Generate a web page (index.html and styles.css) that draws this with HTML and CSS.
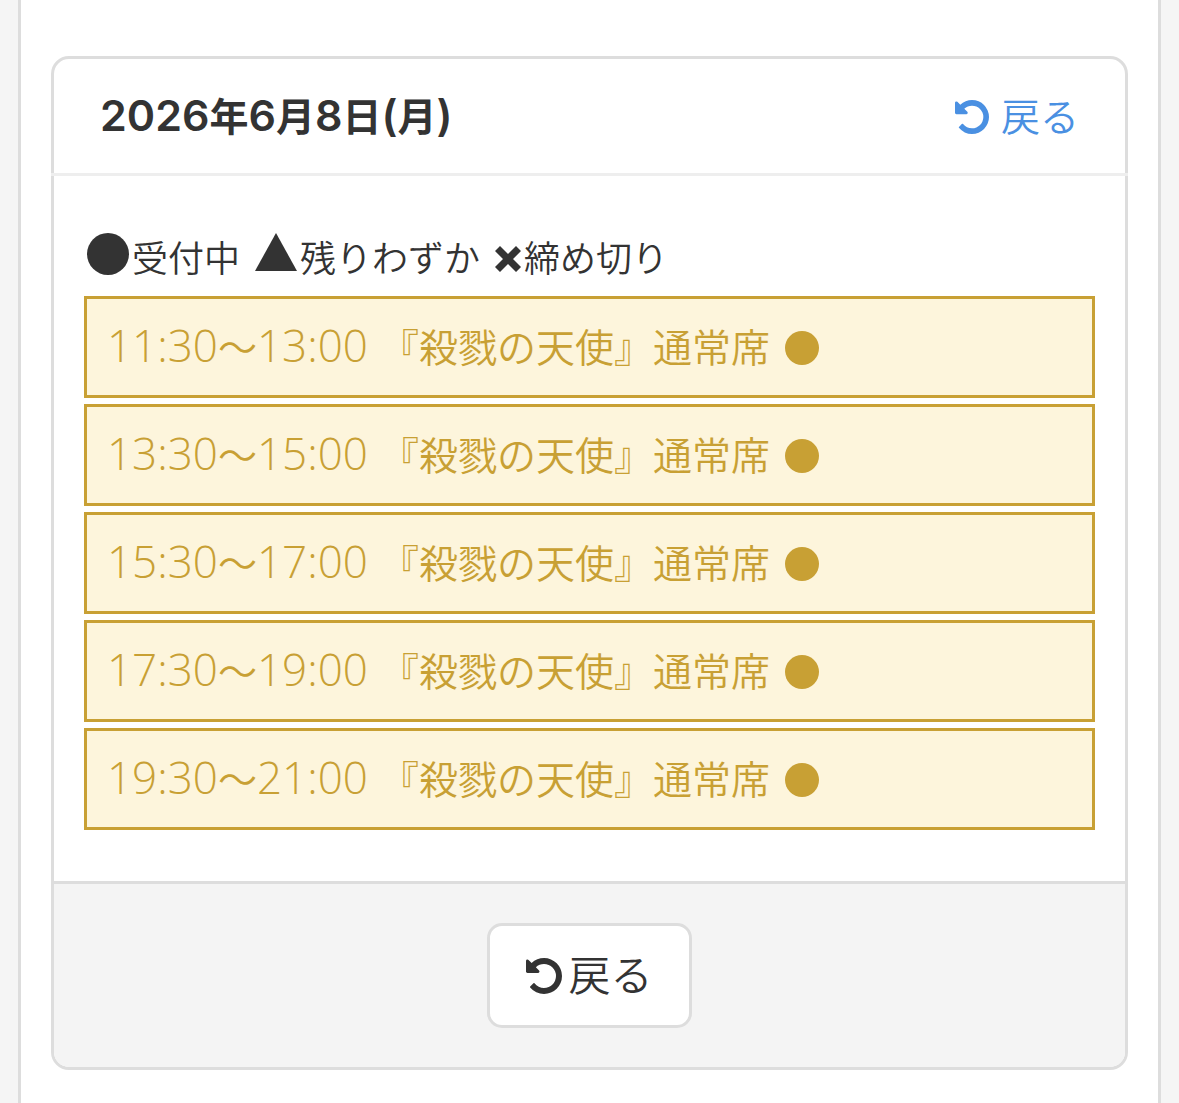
FILE: index.html
```html
<!DOCTYPE html>
<html lang="ja">
<head>
  <meta charset="UTF-8">
  <meta name="viewport" content="width=device-width, initial-scale=1">
  <title>2026年6月8日(月)</title>
  <link rel="stylesheet" href="styles.css">
</head>
<body>

  <svg class="defs" aria-hidden="true">
    <symbol id="undo" viewBox="128 128 1536 1536">
      <path d="M1664 896q0 156-61 298t-164 245-245 164-298 61q-172 0-327-72.500t-264-204.500q-7-10-6.500-22.500t8.500-20.500l137-138q10-9 25-9 16 2 23 12 73 95 179 147t225 52q104 0 198.500-40.500t163.500-109.500 109.500-163.500 40.500-198.500-40.500-198.500-109.500-163.500-163.500-109.500-198.500-40.500q-98 0-188 35.500t-160 101.500l137 138q31 30 14 69-17 40-59 40h-448q-26 0-45-19t-19-45v-448q0-42 40-59 39-17 69 14l130 129q107-101 244.500-156.500t284.500-55.500q156 0 298 61t245 164 164 245 61 298z"/>
    </symbol>
    <symbol id="circle" viewBox="0 0 42 42"><circle cx="21" cy="21" r="21"/></symbol>
    <symbol id="triangle" viewBox="0 0 42 42"><path d="M21 0L42 38H0z"/></symbol>
    <symbol id="times" viewBox="0 0 26 26"><path d="M5 0L13 8L21 0L26 5L18 13L26 21L21 26L13 18L5 26L0 21L8 13L0 5z"/></symbol>
  </svg>

  <main class="page">
    <section class="card">
      <header class="card-header">
        <h1><span class="num">2026</span>年<span class="num">6</span>月<span class="num">8</span>日<span class="num">(</span>月<span class="num">)</span></h1>
        <a class="back-link" href="#"><svg class="icon"><use href="#undo"/></svg>戻る</a>
      </header>

      <div class="card-body">
        <div class="legend">
          <span><svg class="icon-lg"><use href="#circle"/></svg>受付中</span>
          <span><svg class="icon-lg"><use href="#triangle"/></svg>残りわずか</span>
          <span><svg class="icon-sm"><use href="#times"/></svg>締め切り</span>
        </div>

        <ul class="slots">
          <li><a class="slot" href="#"><span class="time">11:30<span class="wave">〜</span>13:00</span>『殺戮の天使』通常席<svg class="icon"><use href="#circle"/></svg></a></li>
          <li><a class="slot" href="#"><span class="time">13:30<span class="wave">〜</span>15:00</span>『殺戮の天使』通常席<svg class="icon"><use href="#circle"/></svg></a></li>
          <li><a class="slot" href="#"><span class="time">15:30<span class="wave">〜</span>17:00</span>『殺戮の天使』通常席<svg class="icon"><use href="#circle"/></svg></a></li>
          <li><a class="slot" href="#"><span class="time">17:30<span class="wave">〜</span>19:00</span>『殺戮の天使』通常席<svg class="icon"><use href="#circle"/></svg></a></li>
          <li><a class="slot" href="#"><span class="time">19:30<span class="wave">〜</span>21:00</span>『殺戮の天使』通常席<svg class="icon"><use href="#circle"/></svg></a></li>
        </ul>
      </div>

      <footer class="card-footer">
        <button class="back-btn" type="button"><svg class="icon"><use href="#undo"/></svg>戻る</button>
      </footer>
    </section>
  </main>

</body>
</html>
```

FILE: styles.css
```css
* {
  box-sizing: border-box;
}

body {
  margin: 0;
  padding: 0 18px;
  background: #f5f5f5;
  color: #333;
  font-family: Inter, "Noto Sans CJK JP", sans-serif;
  font-weight: 350;
  font-size: 39px;
  line-height: 60px;
}

.defs {
  display: none;
}

svg {
  flex: none;
  fill: currentColor;
}

.page {
  min-height: 100vh;
  padding: 56px 30px 33px;
  background: #fff;
  border: solid #ddd;
  border-width: 0 3px;
}

.card {
  border: 3px solid #ddd;
  border-radius: 18px;
}

.card-header {
  display: flex;
  align-items: center;
  justify-content: space-between;
  margin: 0 -3px;
  padding: 28px 49px 26px;
  border-bottom: 3px solid #eee;
}

h1 {
  display: flex;
  align-items: baseline;
  margin: 0;
  font-size: 39px;
  font-weight: 700;
}

.num {
  font-size: 43px;
  font-weight: 600;
  line-height: 48px;
}

.back-link {
  display: flex;
  align-items: center;
  gap: 12px;
  color: #4a90e2;
  text-decoration: none;
}

.icon {
  width: 34px;
  height: 34px;
}

.icon-lg {
  width: 42px;
  height: 42px;
  margin-right: 3px;
  vertical-align: -3px;
}

.icon-sm {
  width: 26px;
  height: 26px;
  margin-right: 3px;
}

.card-body {
  padding: 50px 30px 51px;
}

.legend {
  display: flex;
  flex-wrap: wrap;
  gap: 15px;
  padding: 0 3px 10px;
  font-family: "Noto Sans CJK JP", sans-serif;
  font-size: 36px;
}

.slots {
  display: grid;
  gap: 6px;
  margin: 0;
  padding: 0;
  list-style: none;
}

.slot {
  display: flex;
  align-items: baseline;
  padding: 19px 20px 17px;
  border: 3px solid #c8a034;
  background: #fdf5dc;
  color: #c8a034;
  text-decoration: none;
}

.time {
  margin-right: 12px;
  font-family: "Open Sans", sans-serif;
  font-size: 44px;
  line-height: 48px;
}

.wave {
  font-family: "Noto Sans CJK JP", sans-serif;
  font-size: 39px;
}

.slot .icon {
  align-self: center;
  margin-left: 15px;
}

.card-footer {
  display: flex;
  justify-content: center;
  padding: 39px;
  border-top: 3px solid #ddd;
  border-radius: 0 0 15px 15px;
  background: #f4f4f4;
}

.back-btn {
  display: flex;
  align-items: center;
  gap: 6px;
  padding: 21px 36px;
  border: 3px solid #ddd;
  border-radius: 15px;
  background: #fff;
  color: #333;
  font: inherit;
  font-size: 42px;
  line-height: 57px;
  cursor: pointer;
}

.back-btn .icon {
  width: 36px;
  height: 36px;
}
```
